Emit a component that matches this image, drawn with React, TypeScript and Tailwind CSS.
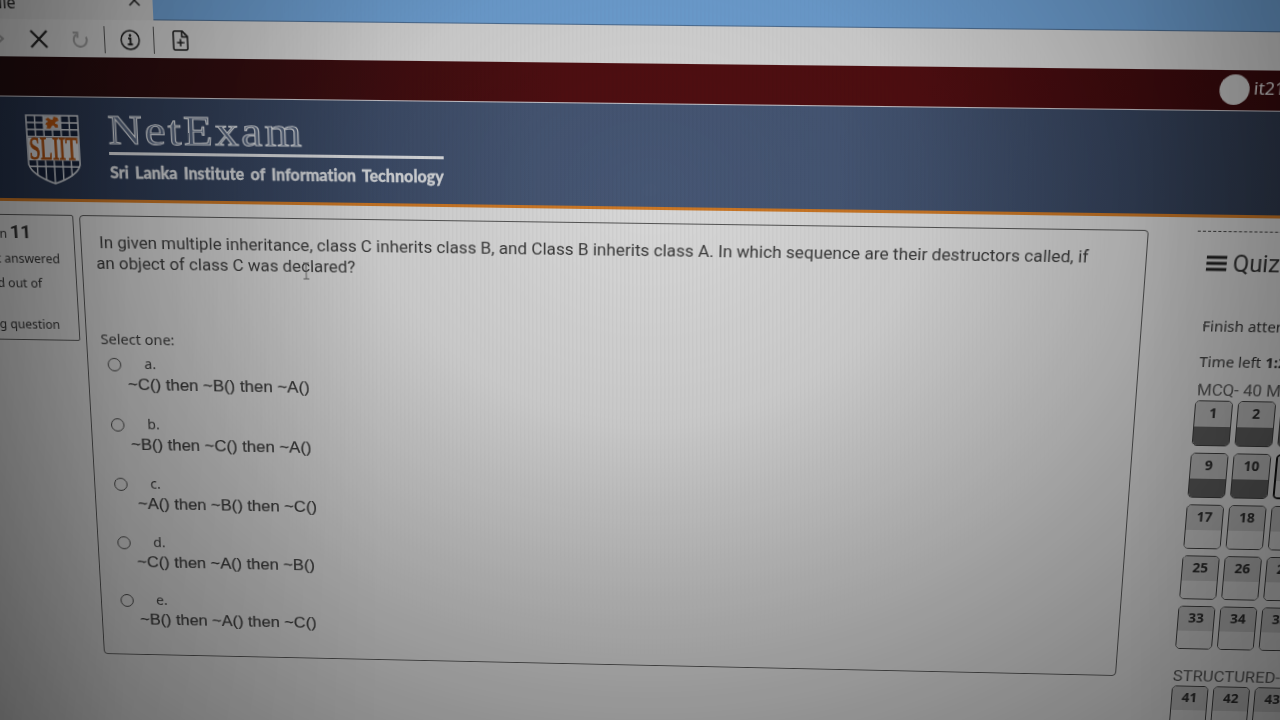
import type { CSSProperties, ReactNode } from "react";

type Point = [number, number];

/** Flat page rectangle and the four screen points (TL, TR, BR, BL) it is seen at. */
const FLAT = { x: 140, y: 235, w: 1070, h: 464 };
const SEEN: Point[] = [
  [79, 215],
  [1149, 230],
  [1116, 676],
  [104, 654],
];

function projection(): string {
  const [[x0, y0], [x1, y1], [x2, y2], [x3, y3]] = SEEN;
  const ax = x1 - x2, ay = y1 - y2, bx = x3 - x2, by = y3 - y2;
  const sx = x0 - x1 + x2 - x3, sy = y0 - y1 + y2 - y3;
  const det = ax * by - ay * bx;
  const g = (sx * by - sy * bx) / det;
  const h = (ax * sy - ay * sx) / det;
  const rows = [
    [x1 - x0 + g * x1, x3 - x0 + h * x3, x0],
    [y1 - y0 + g * y1, y3 - y0 + h * y3, y0],
    [g, h, 1],
  ].map(([p, q, r]) => {
    const a = p / FLAT.w;
    const b = q / FLAT.h;
    return [a, b, r - a * FLAT.x - b * FLAT.y];
  });
  const [X, Y, W] = rows;
  return `matrix3d(${[X[0], Y[0], 0, W[0], X[1], Y[1], 0, W[1], 0, 0, 1, 0, X[2], Y[2], 0, W[2]].join(",")})`;
}

const screenStyle: CSSProperties = { transform: projection() };

const options = [
  { key: "a", text: "~C() then ~B() then ~A()" },
  { key: "b", text: "~B() then ~C() then ~A()" },
  { key: "c", text: "~A() then ~B() then ~C()" },
  { key: "d", text: "~C() then ~A() then ~B()" },
  { key: "e", text: "~B() then ~A() then ~C()" },
];

function Crest() {
  return (
    <svg width="54" height="69" viewBox="0 0 56 70" preserveAspectRatio="none" className="shrink-0">
      <path d="M1 1H55V50Q52 61 28 69Q4 61 1 50Z" fill="#18233a" stroke="#cdd0d5" strokeWidth="1.6" />
      <g stroke="#cdd0d5" strokeWidth="1.5" fill="none">
        <path d="M1 8H55M1 15H55M1 22H55M2 52H54" />
        <path d="M10 1V22M19 1V22M28 15V22M37 1V22M46 1V22M10 46V61M19 46V66M28 46V69M37 46V66M46 46V61" />
      </g>
      <rect x="19" y="1.500" width="18" height="14" fill="#c0c3c8" />
      <path
        d="M21 5l3-2 3 2h2l1-3 4 1 1 3-3 1-1 2 3 1v3h-3l-1-2h-2l-2 3h-4l1-3-2-1 1-2 2-1-1-1z"
        fill="#b25310"
      />
      <rect x="1.500" y="23" width="53" height="23" fill="#d6d8db" />
      <text
        x="28" y="44.500" textAnchor="middle" textLength="51" lengthAdjust="spacingAndGlyphs"
        fontFamily="Liberation Serif, serif" fontSize="32" fill="#a84d0e" stroke="#a84d0e" strokeWidth=".9"
      >
        SLIIT
      </text>
    </svg>
  );
}

function Cell({ n, done, current }: { n: number; done?: boolean; current?: boolean }) {
  return (
    <div
      className={`flex h-[47px] w-[38px] shrink-0 flex-col overflow-hidden rounded-[5px] border ${
        current ? "border-2 border-[#111]" : "border-[#3c3c3c]"
      }`}
    >
      <div className="h-[26px] bg-[#b8b8b8] text-center text-[14px] leading-[23px] font-bold text-[#2a2a2a]">{n}</div>
      <div className={done ? "flex-1 bg-[#5c5c5c]" : "flex-1 bg-[#d0d0d0]"} />
    </div>
  );
}

function Row({ children }: { children: ReactNode }) {
  return <div className="flex gap-[5px]">{children}</div>;
}

function BrowserBar() {
  return (
    <>
      <div className="flex h-[44px] bg-[#6fa1d4]">
        <div className="flex w-[225px] items-start justify-between bg-[#cfcfcf] pt-[18px] pr-[12px] pl-[66px] text-[16px] leading-[20px] text-[#222]">
          <span>file</span>
          <svg width="12" height="12" viewBox="0 0 12 12" className="mt-px" stroke="#222" strokeWidth="1.5">
            <path d="M1 1l10 10M11 1L1 11" />
          </svg>
        </div>
        <div className="flex-1 border-b border-[#4f7095]" />
      </div>
      <div className="flex h-[36px] items-center bg-[#d6d6d6] pt-[2px] pl-[63px] text-[#222]">
        <svg width="14" height="16" viewBox="0 0 14 16" fill="none" stroke="#999" strokeWidth="2">
          <path d="M5 3l6 5-6 5" />
        </svg>
        <svg width="18" height="18" viewBox="0 0 18 18" className="ml-[24px]" stroke="#222" strokeWidth="2.200">
          <path d="M1 1l16 16M17 1L1 17" />
        </svg>
        <svg width="18" height="18" viewBox="0 0 18 18" className="ml-[23px]" fill="none" stroke="#999" strokeWidth="2">
          <path d="M5 4.500A6.500 6.500 0 1 0 15 6.500M2 2.500h4.500v5" />
        </svg>
        <div className="ml-[15px] h-[26px] w-px bg-[#555]" />
        <svg width="20" height="20" viewBox="0 0 20 20" className="ml-[15px]" fill="none" stroke="#222">
          <circle cx="10" cy="10" r="9" strokeWidth="1.500" />
          <path d="M8 8.500h2.300V14M7.500 14.200h5" strokeWidth="1.900" />
          <circle cx="10" cy="5.600" r="1.300" fill="#222" stroke="none" />
        </svg>
        <div className="ml-[13px] h-[26px] w-px bg-[#555]" />
        <svg width="16" height="20" viewBox="0 0 16 20" className="ml-[18px]" fill="none" stroke="#222" strokeWidth="1.600">
          <path d="M1 2.500Q1 1 2.500 1H10l5 5v11.500Q15 19 13.500 19h-11Q1 19 1 17.500ZM9.500 1v5.500H15M8 8.500v7M4.500 12h7" />
        </svg>
      </div>
    </>
  );
}

function Banner() {
  return (
    <>
      <div className="flex h-[39px] items-center border-b-[1.5px] border-[#c8c6cc] bg-[linear-gradient(90deg,#220d0f_4%,#330e10_20%,#500f12_42%,#520f12_65%,#3c0b0e_85%,#300a0c_95%)] pl-[1268px] text-[17px] text-[#ddd]">
        <div className="-mt-[2px] h-[29px] w-[29px] shrink-0 rounded-full bg-[#d0d0d0]" />
        <span className="-mt-[5px] ml-[4px]">it21</span>
      </div>
      <div className="flex h-[103px] items-start border-b-[3px] border-[#cc7826] bg-[linear-gradient(90deg,#26324a_4%,#36445e_20%,#465673_40%,#475876_60%,#384660_78%,#2c3546_95%)] pt-[17px] pl-[91px]">
        <Crest />
        <div className="ml-[29px] flex w-[336px] flex-col">
          <div className="h-[36px] w-[190px] origin-left scale-x-[1.165] font-['Liberation_Serif',serif] text-[41px] leading-[28px] tracking-[2px] text-[#56647d] [-webkit-text-stroke:1.100px_#d6d9dd]">
            NetExam
          </div>
          <div className="h-[3px] bg-[#d9dbde]" />
          <div className="mt-[6px] font-['Lato',sans-serif] text-[16.100px] leading-[22px] font-black whitespace-nowrap text-[#d6d8db] [-webkit-text-stroke:0.300px_#d6d8db] [font-variant-ligatures:none] [word-spacing:2.500px]">
            Sri Lanka Institute of Information Technology
          </div>
        </div>
      </div>
    </>
  );
}

function Info() {
  return (
    <aside className="flex h-[128px] w-[134px] shrink-0 flex-col items-end rounded-r-[2px] border border-[#555] text-[12.500px] leading-[20px] whitespace-nowrap text-[#333]">
      <div className="flex items-baseline gap-[3px] pt-[7px] pr-[43px]">
        Question <b className="font-['Roboto',sans-serif] text-[19px] leading-[20px]">11</b>
      </div>
      <div className="pt-[5px] pr-[15px]">Not answered</div>
      <div className="pt-[5px] pr-[35px]">Marked out of</div>
      <div className="pt-[22px] pr-[19px]">Flag question</div>
    </aside>
  );
}

function Question() {
  return (
    <section className="ml-[6px] h-[464px] w-[1070px] shrink-0 rounded-[4px] border border-[#555] pl-[18px] text-[#3c3c3c]">
      <div className="relative pt-[15px] font-['Roboto',sans-serif] text-[17.200px] leading-[22px] whitespace-nowrap">
        <p>
          In given multiple inheritance, class C inherits class B, and Class B inherits class A. In which sequence are
          their destructors called, if
        </p>
        <p className="-mt-px -ml-[4px]">an object of class C was declared?</p>
        <svg width="8" height="18" viewBox="0 0 8 18" className="absolute top-[43px] left-[206px]" fill="none" stroke="#666">
          <path d="M1 1h6M4 1v16M1 17h6" />
        </svg>
      </div>
      <div className="mt-[55px] -ml-[4px] text-[15px] leading-[22px]">Select one:</div>
      <div className="mt-[5px] flex flex-col">
        {options.map((o) => (
          <div key={o.key} className="h-[63px]">
            <div className="flex h-[21px] items-center text-[14.500px]">
              <span className="ml-[2px] h-[14px] w-[14px] rounded-full border border-[#444]" />
              <span className="-mt-px ml-[24px]">{o.key}.</span>
            </div>
            <div
              className={`-mt-px font-['Liberation_Sans',sans-serif] text-[17.400px] leading-[22px] [-webkit-text-stroke:0.200px_#3c3c3c] ${
                o.key === "c" ? "pl-[26px]" : "pl-[22px]"
              }`}
            >
              {o.text}
            </div>
          </div>
        ))}
      </div>
    </section>
  );
}

function QuizNav() {
  return (
    <nav className="ml-[48px] w-[240px] shrink-0 border-t border-dashed border-[#444] whitespace-nowrap text-[#333]">
      <div className="ml-[11px]">
        <div className="flex items-center gap-[6px] pt-[15px] font-['Roboto',sans-serif] text-[23.500px] leading-[32px]">
          <svg width="20" height="16" viewBox="0 0 20 16" stroke="#222" strokeWidth="3">
            <path d="M0 2h20M0 8h20M0 14h20" />
          </svg>
          Quiz navigation
        </div>
        <div className="pt-[35px] pl-px text-[15px] leading-[22px]">Finish attempt ...</div>
        <div className="pt-[14px] pl-px text-[15px] leading-[22px]">
          Time left <b>1:25:10</b>
        </div>
        <div className="pt-[7px] pl-px font-['Roboto',sans-serif] text-[16.800px] leading-[22px] text-[#555]">MCQ- 40 Marks</div>
        <div className="flex flex-col gap-[7px]">
          <Row><Cell n={1} done /><Cell n={2} done /><Cell n={3} done /></Row>
          <Row><Cell n={9} done /><Cell n={10} done /><Cell n={11} current /></Row>
          <Row><Cell n={17} /><Cell n={18} /><Cell n={19} /></Row>
          <Row><Cell n={25} /><Cell n={26} /><Cell n={27} /></Row>
          <Row><Cell n={33} /><Cell n={34} /><Cell n={35} /></Row>
        </div>
        <div className="pt-[18px] font-['Roboto',sans-serif] text-[17.200px] leading-[22px] text-[#555]">STRUCTURED-</div>
        <Row><Cell n={41} /><Cell n={42} /><Cell n={43} /></Row>
      </div>
    </nav>
  );
}

export default function App() {
  return (
    <div className="relative h-[720px] w-[1280px] overflow-hidden bg-[#d6d6d6] font-['Noto_Sans',sans-serif]">
      <div className="h-[860px] w-[1500px] origin-top-left bg-[#d8d8d8]" style={screenStyle}>
        <BrowserBar />
        <Banner />
        <main className="flex items-start pt-[13px]">
          <Info />
          <Question />
          <QuizNav />
        </main>
      </div>
      <div className="pointer-events-none absolute inset-0 bg-[repeating-linear-gradient(90deg,rgba(0,0,0,0.035)_0px,rgba(0,0,0,0.035)_1px,transparent_2px,transparent_4px)] [mask-image:radial-gradient(ellipse_500px_420px_at_640px_260px,black,transparent)]" />
      <div className="pointer-events-none absolute inset-0 bg-[radial-gradient(ellipse_920px_760px_at_650px_190px,transparent_0%,rgba(0,0,0,0.07)_30%,rgba(0,0,0,0.26)_60%,rgba(0,0,0,0.48)_100%)]" />
      <div className="pointer-events-none absolute inset-0 bg-[linear-gradient(90deg,rgba(0,0,0,0.2)_0%,rgba(0,0,0,0.08)_10%,transparent_30%,transparent_88%,rgba(0,0,0,0.1)_100%)]" />
    </div>
  );
}
